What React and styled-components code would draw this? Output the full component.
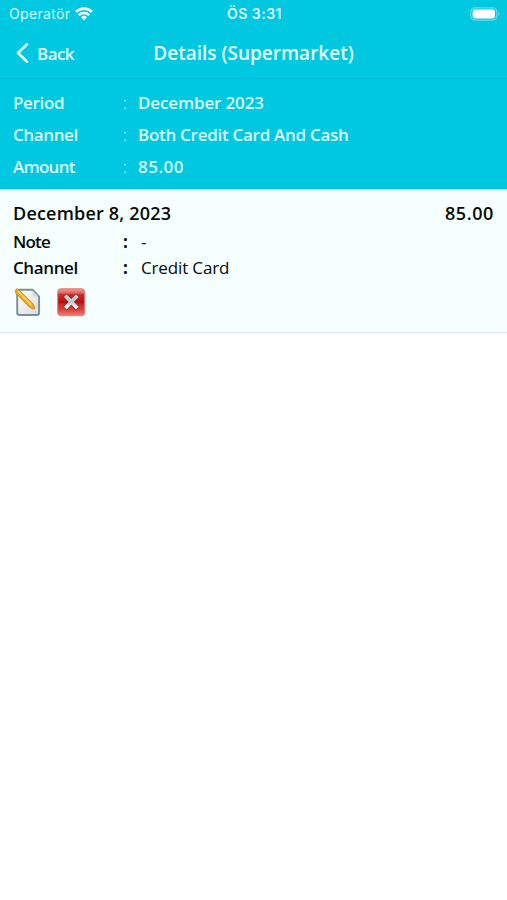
import React from "react";
import styled, { createGlobalStyle } from "styled-components";

const GlobalStyle = createGlobalStyle`
  * { box-sizing: border-box; }
  body { margin: 0; background: #fff; }
`;

const Screen = styled.div`
  width: 100%;
  min-height: 900px;
  background: #fefefe;
  font-family: "Open Sans", "Noto Sans", sans-serif;
`;

const StatusBar = styled.header`
  display: grid;
  grid-template-columns: 1fr auto 1fr;
  align-items: center;
  height: 28px;
  padding: 0 7px 0 9px;
  background: #00c8e1;
  color: #dcfcff;
  font-family: Inter, sans-serif;
  font-size: 14px;
`;

const Carrier = styled.div`
  display: flex;
  align-items: center;
  gap: 5px;
`;

const Battery = styled.div`
  display: flex;
  justify-content: flex-end;
`;

const NavBar = styled.nav`
  display: grid;
  grid-template-columns: 1fr auto 1fr;
  align-items: center;
  height: 51px;
  padding: 0 15px 0 15px;
  background: #00c8e1;
  border-bottom: 1px solid #00bdd8;
  color: #e4fdff;
`;

const BackButton = styled.div`
  display: flex;
  align-items: center;
  gap: 8px;
`;

const Text = styled.span`
  font-size: ${(p) => p.$size || 17}px;
  font-weight: ${(p) => p.$weight || 600};
  letter-spacing: ${(p) => p.$spacing || 0}px;
  line-height: 1;
  white-space: nowrap;
`;

const Summary = styled.section`
  display: flex;
  flex-direction: column;
  height: 110px;
  padding: 7px 13px;
  background: #00c8e1;
  color: #dcfcff;
`;

const Row = styled.div`
  display: grid;
  grid-template-columns: 110px ${(p) => p.$gap || 15}px 1fr;
  align-items: center;
  height: ${(p) => p.$height}px;
`;

const Entry = styled.article`
  height: 144px;
  padding: 10px 13px 0;
  background: #f5fffe;
  border-top: 1px solid #c2f6fb;
  border-bottom: 1px solid #e6ebee;
  color: #080a0a;
`;

const EntryHeader = styled.div`
  display: flex;
  align-items: center;
  justify-content: space-between;
  height: 26px;
  margin-bottom: 2px;
`;

const Actions = styled.div`
  display: flex;
  gap: 15px;
  padding: 8px 0 0 1px;
`;

const Icon = styled.svg`
  display: block;
  flex: none;
`;

function WifiIcon() {
  return (
    <Icon width="18" height="14" viewBox="0 0 19 14" fill="none" stroke="#f0feff" strokeWidth="2.8">
      <path d="M1 4.8a12.2 12.2 0 0 1 17 0" />
      <path d="M4.1 8.2a7.7 7.7 0 0 1 10.8 0" />
      <path d="M9.5 13.6 6.4 10.5a4.4 4.4 0 0 1 6.2 0Z" fill="#f0feff" stroke="none" />
    </Icon>
  );
}

function BatteryIcon() {
  return (
    <Icon width="30" height="14" viewBox="0 0 30 14">
      <rect x="0.8" y="0.8" width="26" height="12.4" rx="4" fill="none" stroke="#62dcec" strokeWidth="1.2" />
      <rect x="2.6" y="2.6" width="22.4" height="8.8" rx="2.3" fill="#fff" />
      <path d="M28.3 4.8c1.6.7 1.6 3.7 0 4.4Z" fill="#62dcec" />
    </Icon>
  );
}

function EditIcon() {
  return (
    <Icon width="28" height="30" viewBox="0 0 28 30">
      <defs>
        <linearGradient id="paper" x1="0" y1="0" x2="1" y2="1">
          <stop offset="0" stopColor="#fff" />
          <stop offset="1" stopColor="#d8dcde" />
        </linearGradient>
      </defs>
      <path
        d="M5.5 1.7H18.5l6.6 6.9V24.7a2.3 2.3 0 0 1-2.3 2.3H5.5a2.3 2.3 0 0 1-2.3-2.3V4a2.3 2.3 0 0 1 2.3-2.3Z"
        fill="url(#paper)"
        stroke="#7d8c94"
        strokeWidth="1.9"
        strokeLinejoin="round"
      />
      <path d="M18.5 2.4v5.2a1 1 0 0 0 1 1h4.9Z" fill="#d5dcdf" />
      <path d="M4.2 1.1 19 15.8l1.9 4.1c.2 1-.6 1.5-1.5 1.2l-3.7-1.7L1.7 5.2C.3 3.3 2.1-.4 4.2 1.1Z" fill="#eda51c" stroke="#c9882b" strokeWidth="0.8" strokeLinejoin="round" />
      <path d="m3.9 3.2 13.7 14" stroke="#ffdc70" strokeWidth="1.5" />
    </Icon>
  );
}

function DeleteIcon() {
  return (
    <Icon width="29" height="30" viewBox="0 0 29 30">
      <defs>
        <linearGradient id="red" x1="0" y1="0" x2="0" y2="1">
          <stop offset="0" stopColor="#ef9d96" />
          <stop offset="0.16" stopColor="#df625c" />
          <stop offset="0.22" stopColor="#c92a27" />
          <stop offset="0.52" stopColor="#b80f0f" />
          <stop offset="0.56" stopColor="#cc2423" />
          <stop offset="0.8" stopColor="#dd4642" />
          <stop offset="1" stopColor="#ef8078" />
        </linearGradient>
        <linearGradient id="cross" x1="0" y1="0" x2="0" y2="1">
          <stop offset="0" stopColor="#cdcfd0" />
          <stop offset="0.5" stopColor="#bfc4c5" />
          <stop offset="1" stopColor="#f5f7f7" />
        </linearGradient>
      </defs>
      <rect x="0.7" y="0.7" width="27" height="27" rx="3" fill="url(#red)" stroke="#dc827c" />
      <path d="m9.6 9.2 9.4 9.8M19 9.2 9.6 19" stroke="#8d2a28" strokeWidth="5" strokeLinecap="square" />
      <path d="m9.6 9 9.4 9.8M19 9 9.6 18.8" stroke="url(#cross)" strokeWidth="3.8" strokeLinecap="square" />
    </Icon>
  );
}

const summaryRows = [
  { label: "Period", value: "December 2023", labelSpacing: -0.35, spacing: -0.15 },
  { label: "Channel", value: "Both Credit Card And Cash", labelSpacing: -0.4, spacing: -0.28 },
  { label: "Amount", value: "85.00", labelSpacing: -0.75, spacing: 0.5 },
];

const entryRows = [
  { label: "Note", value: "-", labelSpacing: -0.8 },
  { label: "Channel", value: "Credit Card", labelSpacing: -0.4, spacing: -0.15 },
];

export default function App() {
  return (
    <>
      <GlobalStyle />
      <Screen>
        <StatusBar>
          <Carrier>
            <Text $size={14} $weight={400} $spacing={0.35}>Operatör</Text>
            <WifiIcon />
          </Carrier>
          <Text $size={14} $spacing={0.5}>ÖS 3:31</Text>
          <Battery><BatteryIcon /></Battery>
        </StatusBar>
        <NavBar>
          <BackButton>
            <Icon width="14" height="20" viewBox="0 0 14 20" fill="none" stroke="#e4fdff" strokeWidth="2.6" strokeLinecap="round" strokeLinejoin="round">
              <path d="m12 1.2-9 8.8 9 8.8" />
            </Icon>
            <Text $spacing={-0.55}>Back</Text>
          </BackButton>
          <Text $size={19}>Details (Supermarket)</Text>
        </NavBar>
        <Summary>
          {summaryRows.map((r) => (
            <Row key={r.label} $height={32}>
              <Text $spacing={r.labelSpacing}>{r.label}</Text>
              <Text $weight={300}>:</Text>
              <Text $spacing={r.spacing}>{r.value}</Text>
            </Row>
          ))}
        </Summary>
        <Entry>
          <EntryHeader>
            <Text $size={18} $spacing={0.2}>December 8, 2023</Text>
            <Text $size={18} $spacing={0.6}>85.00</Text>
          </EntryHeader>
          {entryRows.map((r) => (
            <Row key={r.label} $height={26} $gap={18}>
              <Text $spacing={r.labelSpacing}>{r.label}</Text>
              <Text $weight={700}>:</Text>
              <Text $weight={400} $spacing={r.spacing}>{r.value}</Text>
            </Row>
          ))}
          <Actions>
            <EditIcon />
            <DeleteIcon />
          </Actions>
        </Entry>
      </Screen>
    </>
  );
}
